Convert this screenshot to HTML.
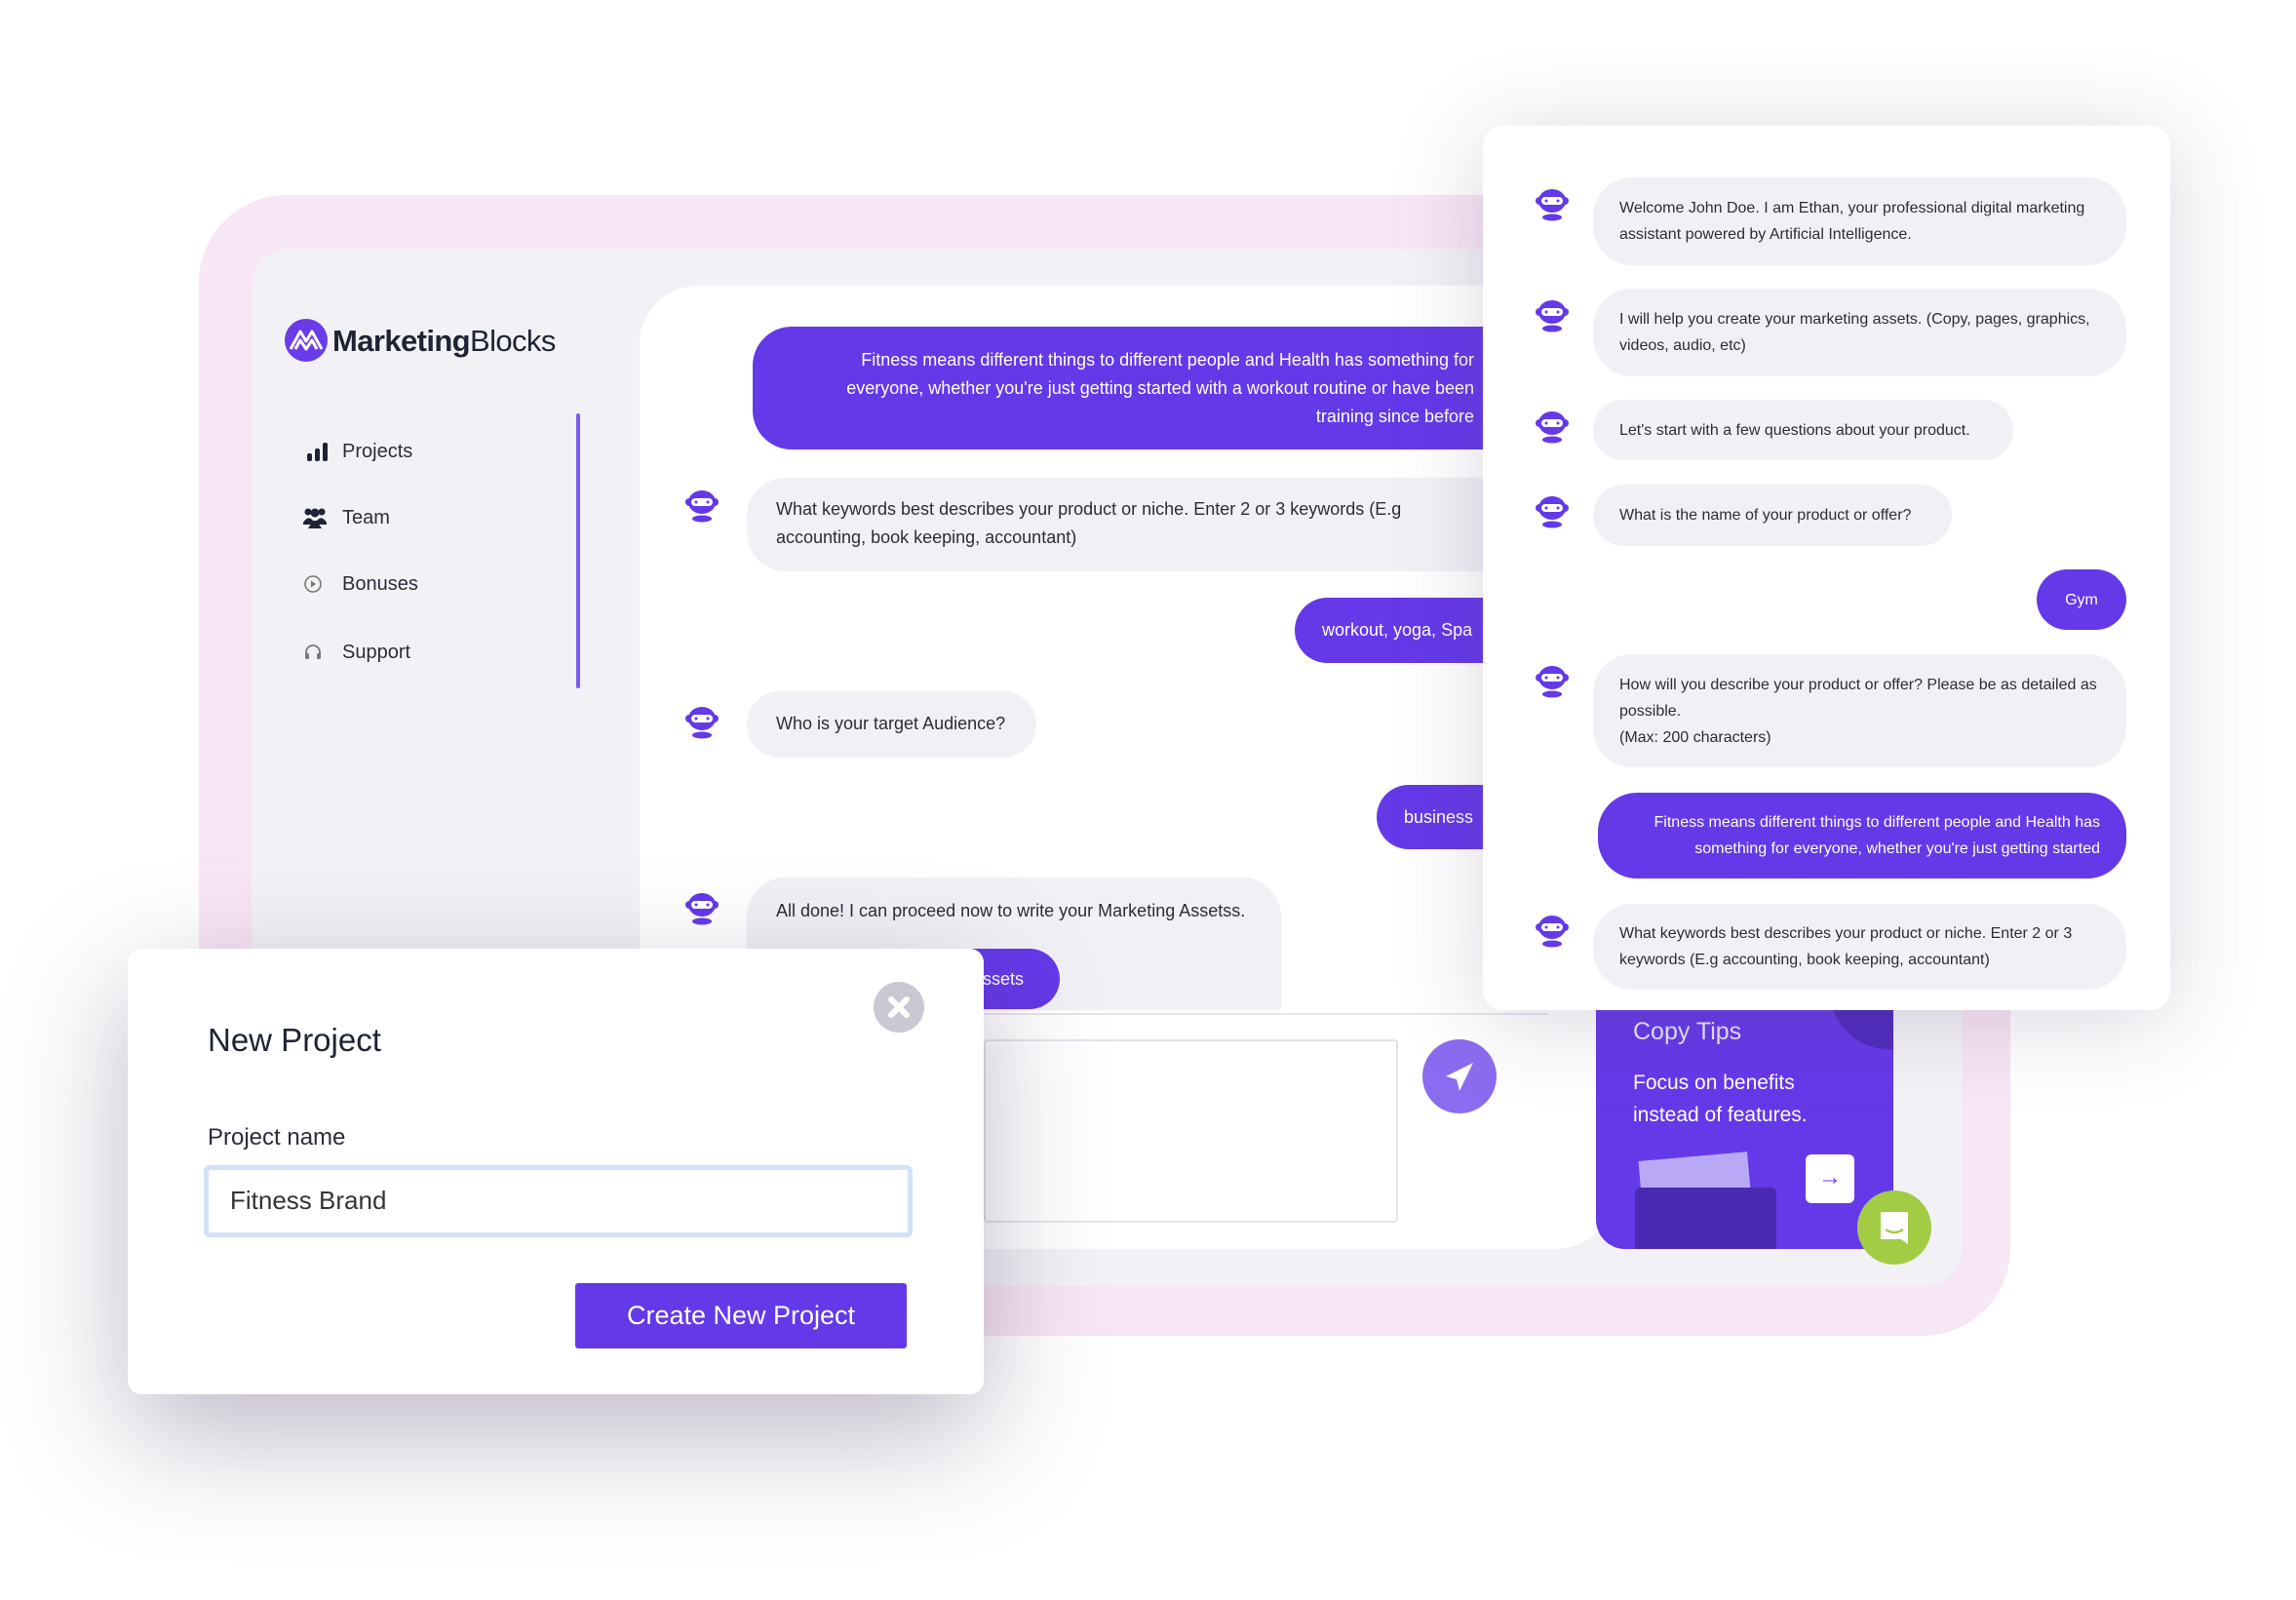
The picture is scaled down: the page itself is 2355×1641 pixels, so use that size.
<!DOCTYPE html>
<html><head><meta charset="utf-8"><style>
*{box-sizing:border-box;margin:0;padding:0}
body{width:2355px;height:1641px;background:#fff;position:relative;overflow:hidden;font-family:"Liberation Sans",sans-serif;color:#2c2c3a}
.a{position:absolute}
.pink{left:204px;top:200px;width:1858px;height:1170px;background:#f7e6f4;border-radius:90px}
.gray{left:258px;top:255px;width:1755px;height:1064px;background:#f2f2f6;border-radius:40px}
.chat{left:656px;top:293px;width:1000px;height:988px;background:#fff;border-radius:60px 0 60px 0}
.pb{background:#6439e8;color:#fff;border-radius:40px}
.gb{background:#f1f1f5;color:#2c2c3a;border-radius:40px}
.t19{font-size:18px;line-height:29px}
.nav{font-size:20px;color:#2c2c3a}
.rp{left:1521px;top:129px;width:705px;height:907px;background:#fff;border-radius:20px;box-shadow:0 10px 90px rgba(90,70,110,.22)}
.rb{font-size:16px;line-height:27px;padding:0 27px;display:flex;flex-direction:column;justify-content:center}
.nw{white-space:nowrap}
.modal{left:131px;top:973px;width:878px;height:457px;background:#fff;border-radius:14px;box-shadow:0 40px 120px rgba(70,50,90,.35)}
</style></head><body>
<div class="a pink"></div>
<div class="a gray"></div>
<div class="a chat"></div>
<div class="a" style="left:656px;top:1039px;width:932px;height:242px;background:#fff;border-radius:0 0 60px 0;border-top:2px solid #e6e6ee"></div>

<svg class="a" style="left:291px;top:326px" width="46" height="46" viewBox="0 0 46 46"><circle cx="23" cy="23" r="22" fill="#6a3be8"/><path d="M7 32 L17 14 L23 24 L29 14 L39 32 M12 32 L17 23 L23 32 L29 23 L34 32" stroke="#fff" stroke-width="3" fill="none" stroke-linejoin="round"/></svg>
<div class="a" style="left:341px;top:332px;font-size:31px;letter-spacing:-.6px;color:#1e2433"><b>Marketing</b>Blocks</div>

<svg class="a" style="left:315px;top:453px" width="24" height="20"><rect x="0" y="12" width="5" height="8" rx="2" fill="#1e2433"/><rect x="8" y="7" width="5" height="13" rx="2" fill="#1e2433"/><rect x="16" y="1" width="5" height="19" rx="2" fill="#1e2433"/></svg>
<div class="a nav" style="left:351px;top:452px">Projects</div>
<svg class="a" style="left:311px;top:520px" width="24" height="22"><circle cx="5" cy="5" r="3.5" fill="#1e2433"/><circle cx="19" cy="5" r="3.5" fill="#1e2433"/><circle cx="12" cy="6" r="4.5" fill="#1e2433"/><path d="M0 16 Q5 8 10 14 L14 14 Q19 8 24 16 L24 18 L0 18Z" fill="#1e2433"/><path d="M5 22 Q12 9 19 22Z" fill="#1e2433"/></svg>
<div class="a nav" style="left:351px;top:520px">Team</div>
<svg class="a" style="left:311px;top:589px" width="20" height="20"><circle cx="10" cy="10" r="8" stroke="#777" stroke-width="1.6" fill="none"/><path d="M8 6.5 L13 10 L8 13.5Z" fill="#777"/></svg>
<div class="a nav" style="left:351px;top:588px">Bonuses</div>
<svg class="a" style="left:311px;top:659px" width="20" height="20"><path d="M3 13 V10 A7 7 0 0 1 17 10 V13" stroke="#777" stroke-width="1.8" fill="none"/><rect x="2" y="11" width="4" height="6" rx="1.5" fill="#777"/><rect x="14" y="11" width="4" height="6" rx="1.5" fill="#777"/></svg>
<div class="a nav" style="left:351px;top:658px">Support</div>
<div class="a" style="left:591px;top:424px;width:4px;height:282px;background:#7b5cf0;border-radius:2px"></div>

<svg width="0" height="0" style="position:absolute"><defs><g id="bot"><ellipse cx="20" cy="15" rx="14" ry="12" fill="#6439e8"/><rect x="3" y="11" width="34" height="8" rx="4" fill="#6439e8"/><rect x="9" y="11" width="22" height="8" rx="4" fill="#fff"/><circle cx="14" cy="15" r="1.5" fill="#6439e8"/><circle cx="26" cy="15" r="1.5" fill="#6439e8"/><ellipse cx="20" cy="32" rx="10" ry="3.5" fill="#6439e8"/></g></defs></svg>

<div class="a pb t19" style="left:772px;top:335px;width:790px;height:126px;padding:20px 50px 0 80px;text-align:right">Fitness means different things to different people and Health has something for everyone, whether you're just getting started with a workout routine or have been training since before</div>
<svg class="a" style="left:700px;top:500px" width="40" height="40"><use href="#bot"/></svg>
<div class="a gb t19" style="left:766px;top:490px;width:800px;height:96px;padding:18px 30px 0 30px">What keywords best describes your product or niche. Enter 2 or 3 keywords (E.g<br>accounting, book keeping, accountant)</div>
<div class="a pb t19" style="left:1328px;top:613px;width:240px;height:67px;padding:19px 0 0 28px">workout, yoga, Spa</div>
<svg class="a" style="left:700px;top:722px" width="40" height="40"><use href="#bot"/></svg>
<div class="a gb t19" style="left:766px;top:709px;width:297px;height:68px;padding:19px 0 0 30px">Who is your target Audience?</div>
<div class="a pb t19" style="left:1412px;top:805px;width:160px;height:66px;padding:19px 0 0 28px">business</div>
<svg class="a" style="left:700px;top:913px" width="40" height="40"><use href="#bot"/></svg>
<div class="a gb t19" style="left:766px;top:900px;width:548px;height:136px;padding:20px 0 0 30px;border-radius:40px 40px 0 0">All done! I can proceed now to write your Marketing Assetss.</div>
<div class="a pb t19" style="left:880px;top:973px;width:207px;height:62px;padding:17px 0 0 128px">ssets</div>

<div class="a" style="left:1009px;top:1066px;width:425px;height:188px;border:2px solid #e3e3ea;border-radius:4px;background:#fff"></div>
<svg class="a" style="left:1459px;top:1066px" width="76" height="76"><circle cx="38" cy="38" r="38" fill="#8b6cf0"/><path d="M52 24 L24 38 L35 41 Z M52 24 L35 41 L38 53 Z" fill="#fff"/></svg>

<div class="a" style="left:1637px;top:1036px;width:305px;height:245px;background:#6439e8;border-radius:0 0 0 30px;overflow:hidden">
<div class="a" style="left:240px;top:-40px;width:100px;height:80px;background:#4e2bbf;border-radius:0 0 0 60px"></div>
<div class="a" style="left:38px;top:8px;font-size:25px;color:#e9e4ff">Copy Tips</div>
<div class="a" style="left:38px;top:58px;font-size:21px;line-height:33px;color:#fff">Focus on benefits<br>instead of features.</div>
<div class="a" style="left:45px;top:150px;width:112px;height:40px;background:#b9a8f5;transform:rotate(-5deg)"></div>
<div class="a" style="left:40px;top:182px;width:145px;height:70px;background:#4a2ab0;border-radius:6px 6px 0 0"></div>
<div class="a" style="left:215px;top:148px;width:50px;height:50px;background:#fff;border-radius:6px;color:#6439e8;font-size:24px;text-align:center;line-height:48px;font-weight:bold">&#8594;</div>
</div>
<svg class="a" style="left:1905px;top:1221px" width="76" height="76"><circle cx="38" cy="38" r="38" fill="#a3cc45"/><path d="M24 22 H52 V55 L45 50 H24 Z" fill="#fff"/><path d="M29 40 Q38 46 47 40" stroke="#a3cc45" stroke-width="2.5" fill="none"/></svg>

<div class="a rp">
<svg class="a" style="left:51px;top:62px" width="40" height="40"><use href="#bot"/></svg>
<div class="a gb rb" style="left:113px;top:53px;width:547px;height:90px">Welcome John Doe. I am Ethan, your professional digital marketing assistant powered by Artificial Intelligence.</div>
<svg class="a" style="left:51px;top:176px" width="40" height="40"><use href="#bot"/></svg>
<div class="a gb rb" style="left:113px;top:167px;width:547px;height:90px">I will help you create your marketing assets. (Copy, pages, graphics, videos, audio, etc)</div>
<svg class="a" style="left:51px;top:290px" width="40" height="40"><use href="#bot"/></svg>
<div class="a gb rb nw" style="left:113px;top:281px;width:431px;height:62px">Let's start with a few questions about your product.</div>
<svg class="a" style="left:51px;top:377px" width="40" height="40"><use href="#bot"/></svg>
<div class="a gb rb nw" style="left:113px;top:368px;width:368px;height:63px">What is the name of your product or offer?</div>
<div class="a pb rb" style="left:568px;top:455px;width:92px;height:62px;padding:0;align-items:center">Gym</div>
<svg class="a" style="left:51px;top:551px" width="40" height="40"><use href="#bot"/></svg>
<div class="a gb rb" style="left:113px;top:542px;width:547px;height:116px">How will you describe your product or offer? Please be as detailed as possible.<br>(Max: 200 characters)</div>
<div class="a pb rb" style="left:118px;top:684px;width:542px;height:88px;text-align:right">Fitness means different things to different people and Health has something for everyone, whether you're just getting started</div>
<svg class="a" style="left:51px;top:807px" width="40" height="40"><use href="#bot"/></svg>
<div class="a gb rb" style="left:113px;top:798px;width:547px;height:88px">What keywords best describes your product or niche. Enter 2 or 3 keywords (E.g accounting, book keeping, accountant)</div>
</div>

<div class="a modal">
<div class="a" style="left:82px;top:75px;font-size:33px;color:#1e2433">New Project</div>
<svg class="a" style="left:765px;top:34px" width="52" height="52"><circle cx="26" cy="26" r="26" fill="#c8c9d2"/><path d="M18 18 L34 34 M34 18 L18 34" stroke="#fff" stroke-width="6" stroke-linecap="round"/></svg>
<div class="a" style="left:82px;top:180px;font-size:24px;color:#2c2c3a">Project name</div>
<div class="a" style="left:81px;top:225px;width:721px;height:68px;border:2px solid #d5e3f3;box-shadow:0 0 0 3px #cfe2f7;border-radius:3px;padding:16px 22px;font-size:26px;color:#333">Fitness Brand</div>
<div class="a" style="left:459px;top:343px;width:340px;height:67px;background:#6439e8;color:#fff;font-size:27px;text-align:center;line-height:67px;border-radius:3px">Create New Project</div>
</div>
</body></html>
